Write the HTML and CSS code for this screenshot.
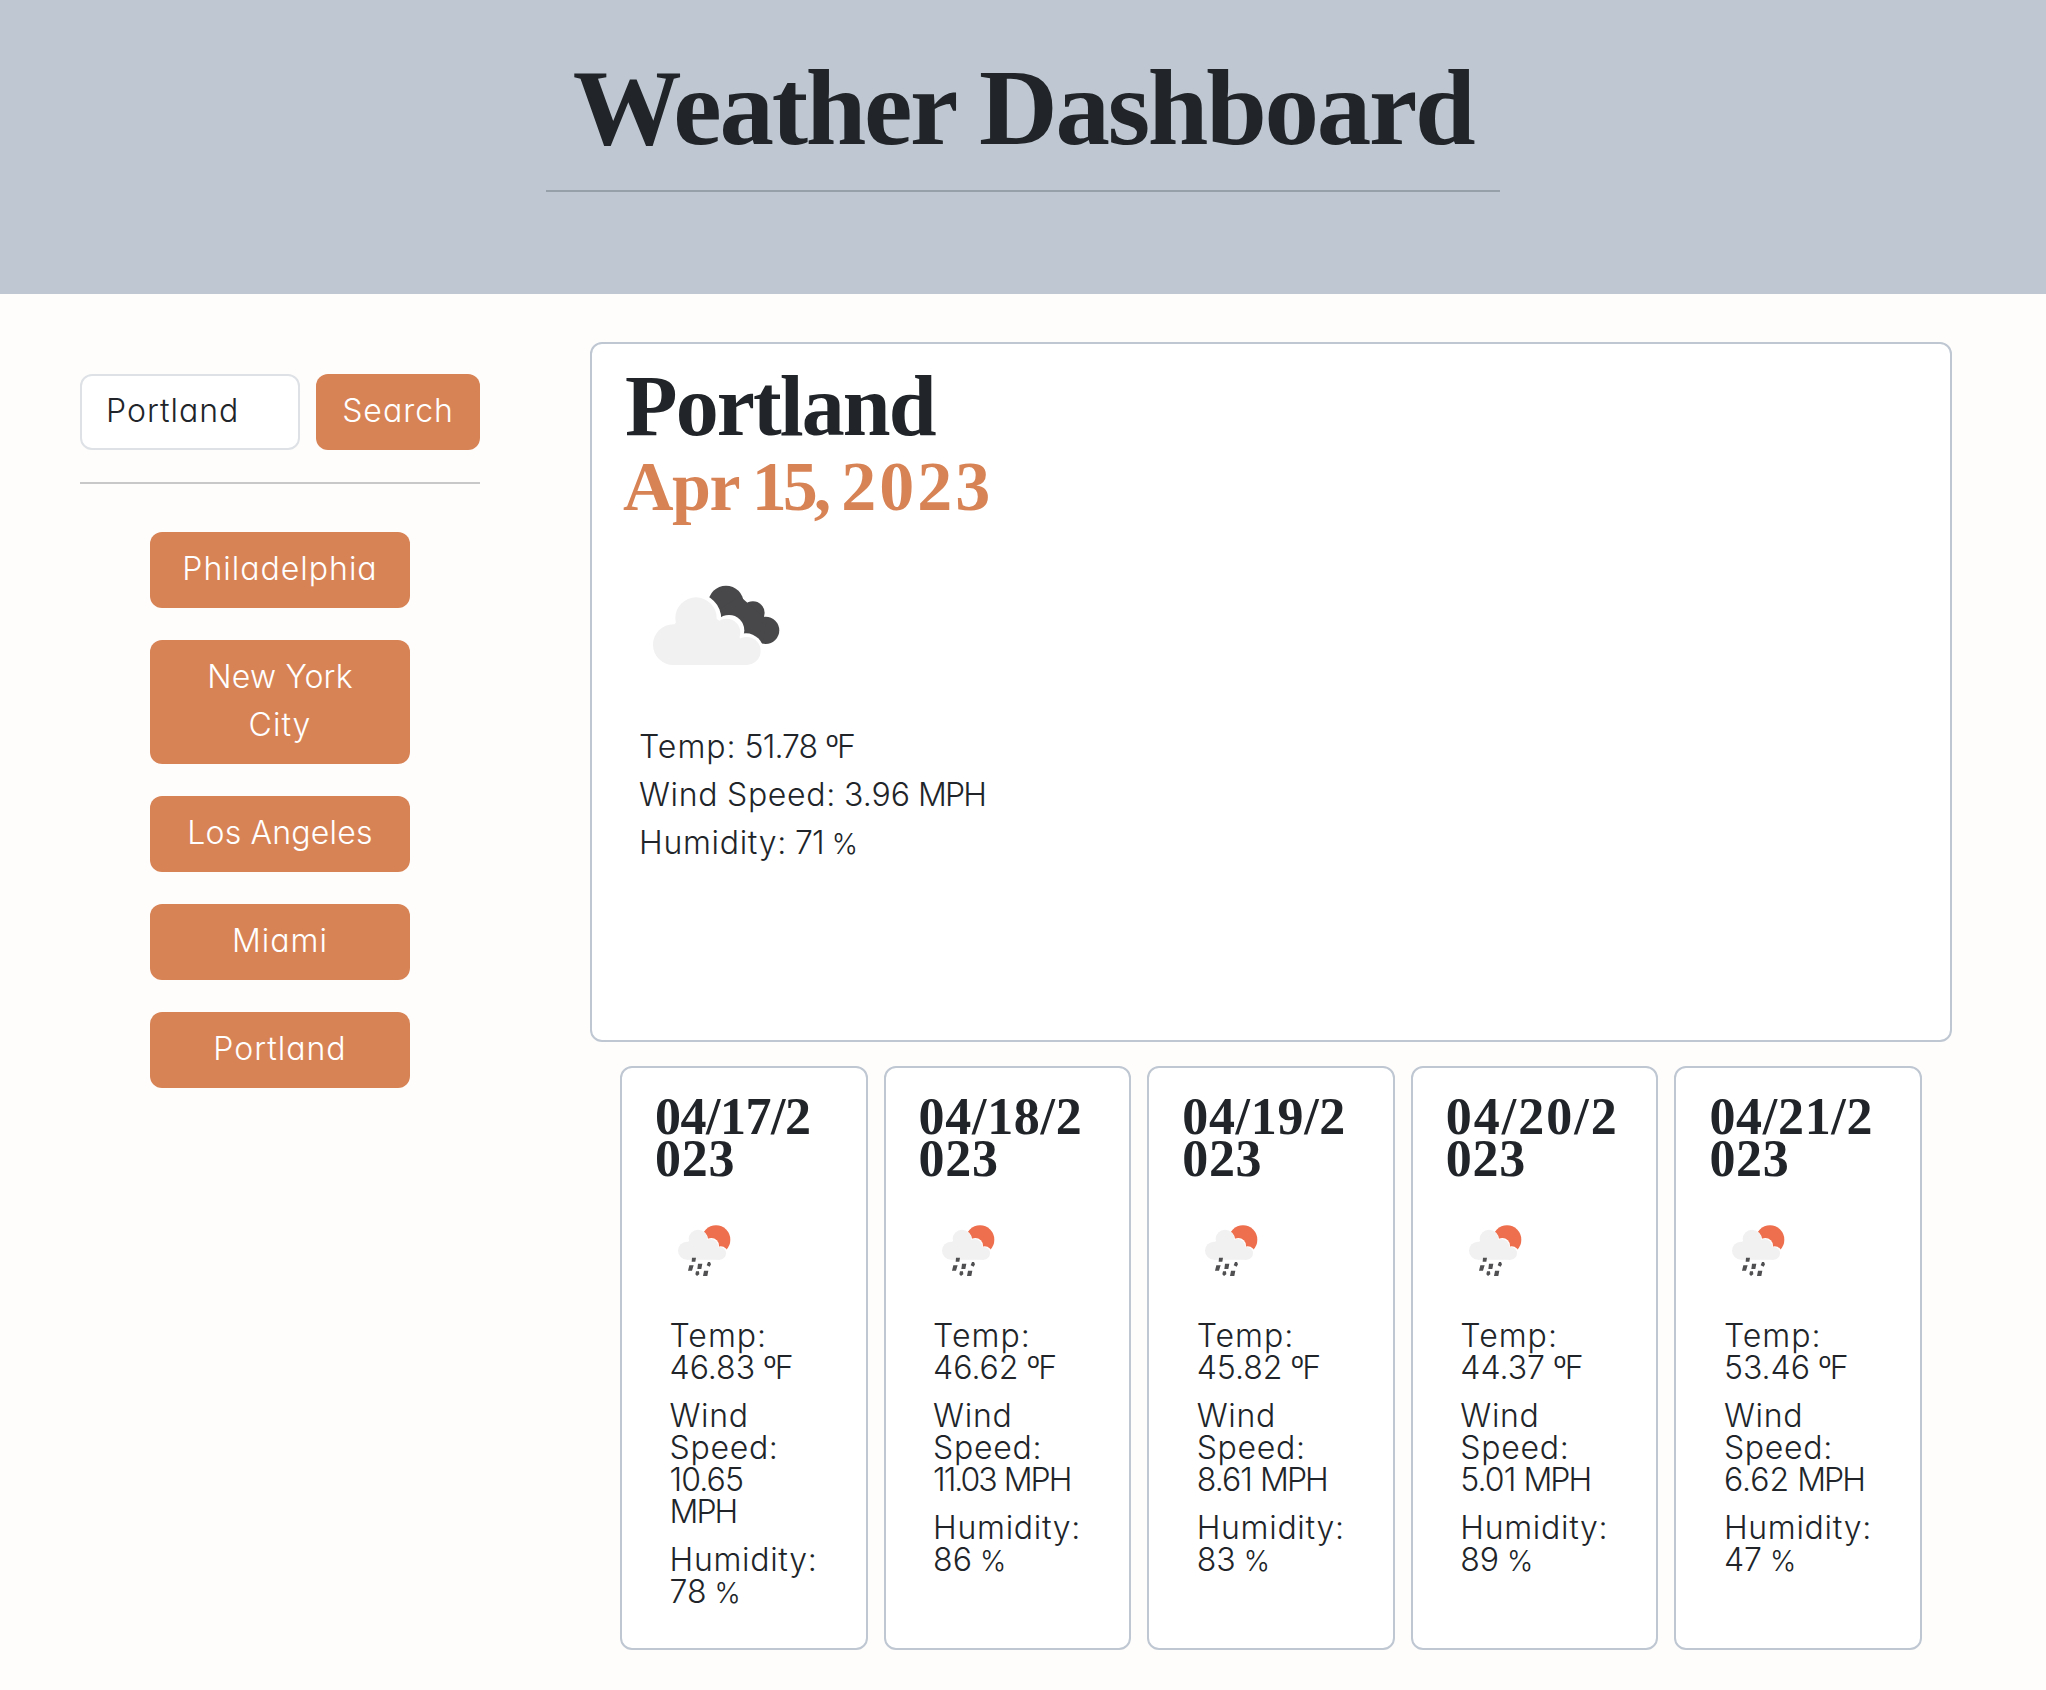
FILE: index.html
```html
<!DOCTYPE html>
<html lang="en">
<head>
<meta charset="utf-8">
<title>Weather Dashboard</title>
<link rel="stylesheet" href="styles.css">
</head>
<body>
<svg class="defs" width="0" height="0" aria-hidden="true">
  <symbol id="broken-clouds" viewBox="210 760 400 256">
    <g fill="#48484a">
      <circle cx="438" cy="821" r="53"/>
      <circle cx="519" cy="850" r="35"/>
      <circle cx="557" cy="902" r="41"/>
      <path d="M400 850L480 800L560 870L550 940L500 930Z"/>
    </g>
    <g fill="#fff">
      <circle cx="348" cy="868" r="76"/>
      <circle cx="447" cy="902" r="46"/>
      <circle cx="498" cy="964" r="53"/>
      <path d="M360 900H480V960H360Z"/>
    </g>
    <g fill="#f1f1f1">
      <circle cx="348" cy="865" r="62"/>
      <circle cx="280" cy="945" r="61"/>
      <circle cx="440" cy="908" r="41"/>
      <circle cx="500" cy="964" r="42"/>
      <path d="M280 890L300 860H400L478 920L500 1006H280Z"/>
    </g>
  </symbol>
  <symbol id="sun-rain" viewBox="198 580 168 164">
    <circle cx="318" cy="630" r="43" fill="#ed6f4d"/>
    <g fill="#fff">
      <circle cx="264" cy="632" r="31"/>
      <circle cx="304" cy="648" r="23"/>
      <circle cx="332" cy="672" r="22"/>
      <path d="M270 645H325V690H270Z"/>
    </g>
    <g fill="#f1f1f1">
      <circle cx="264" cy="628" r="28"/>
      <circle cx="231" cy="663" r="27"/>
      <circle cx="302" cy="650" r="22"/>
      <circle cx="329" cy="671" r="19"/>
      <path d="M231 640L245 625H285L322 655L329 690H231Z"/>
    </g>
    <g fill="#505052">
      <path d="M246 684h12l-2 12h-11zM238 707h13l-5 16h-12zM264 702h13l-3 16h-12zM294 697h6l3 7-4 7-9-4zM258 725h9l1 9-7 5-5-5zM282 723h13l-3 16h-13z"/>
    </g>
  </symbol>
</svg>

<header class="header">
  <h1 class="title">Weather Dashboard</h1>
  <hr class="title-rule">
</header>

<main class="layout">
  <aside class="sidebar">
    <form class="search">
      <div class="search-input">Portland</div>
      <button class="btn search-btn" type="button">Search</button>
    </form>
    <hr class="rule">
    <div class="history">
      <button class="btn" type="button">Philadelphia</button>
      <button class="btn tight" type="button">New York <span class="wide">City</span></button>
      <button class="btn tight" type="button">Los Angeles</button>
      <button class="btn" type="button">Miami</button>
      <button class="btn" type="button">Portland</button>
    </div>
  </aside>

  <section class="weather">
    <article class="current">
      <h2 class="city">Portland</h2>
      <h3 class="date">Apr <span class="date-day">15,</span> <span class="date-year">2023</span></h3>
      <svg class="icon-current"><use href="#broken-clouds"/></svg>
      <div class="stats">
        <p><span class="wide">Temp:</span> <span class="ones">51.78</span> <span class="deg">ºF</span></p>
        <p><span class="word">Wind Speed:</span> 3.96 <span class="mph">MPH</span></p>
        <p><span class="word">Humidity:</span> <span class="ones">71</span> <span class="pct">%</span></p>
      </div>
    </article>

    <div class="forecast">
      <article class="day">
        <h4><span class="snug">04/17/2</span><br>023</h4>
        <svg class="icon-day"><use href="#sun-rain"/></svg>
        <div class="day-stats">
          <p><span class="wide">Temp:</span><br>46.83 <span class="deg">ºF</span></p>
          <p><span class="word">Wind<br>Speed:</span><br><span class="ones">10.65</span><br><span class="mph">MPH</span></p>
          <p><span class="word">Humidity:</span><br>78 <span class="pct">%</span></p>
        </div>
      </article>
      <article class="day">
        <h4>04/18/2<br>023</h4>
        <svg class="icon-day"><use href="#sun-rain"/></svg>
        <div class="day-stats">
          <p><span class="wide">Temp:</span><br>46.62 <span class="deg">ºF</span></p>
          <p><span class="word">Wind<br>Speed:</span><br><span class="elevens">11.03</span> <span class="mph">MPH</span></p>
          <p><span class="word">Humidity:</span><br>86 <span class="pct">%</span></p>
        </div>
      </article>
      <article class="day">
        <h4>04/19/2<br>023</h4>
        <svg class="icon-day"><use href="#sun-rain"/></svg>
        <div class="day-stats">
          <p><span class="wide">Temp:</span><br>45.82 <span class="deg">ºF</span></p>
          <p><span class="word">Wind<br>Speed:</span><br><span class="ones">8.61</span> <span class="mph">MPH</span></p>
          <p><span class="word">Humidity:</span><br>83 <span class="pct">%</span></p>
        </div>
      </article>
      <article class="day">
        <h4><span class="loose">04/20/2</span><br>023</h4>
        <svg class="icon-day"><use href="#sun-rain"/></svg>
        <div class="day-stats">
          <p><span class="wide">Temp:</span><br>44.37 <span class="deg">ºF</span></p>
          <p><span class="word">Wind<br>Speed:</span><br><span class="ones">5.01</span> <span class="mph">MPH</span></p>
          <p><span class="word">Humidity:</span><br>89 <span class="pct">%</span></p>
        </div>
      </article>
      <article class="day">
        <h4>04/21/2<br>023</h4>
        <svg class="icon-day"><use href="#sun-rain"/></svg>
        <div class="day-stats">
          <p><span class="wide">Temp:</span><br>53.46 <span class="deg">ºF</span></p>
          <p><span class="word">Wind<br>Speed:</span><br>6.62 <span class="mph">MPH</span></p>
          <p><span class="word">Humidity:</span><br>47 <span class="pct">%</span></p>
        </div>
      </article>
    </div>
  </section>
</main>
</body>
</html>
```
FILE: styles.css
```css
* { box-sizing: border-box; margin: 0; padding: 0; }

body {
  min-height: 100vh;
  background: #fffdfc;
  color: #212529;
  font: 300 32px/48px Inter, "Open Sans", sans-serif;
  font-feature-settings: "cv11";
}

.defs { position: absolute; }

h1, h2, h3, h4 {
  font-family: "Liberation Serif", serif;
  font-weight: 700;
  white-space: nowrap;
}

hr { border: 0; height: 2px; }

.header {
  height: 294px;
  padding-top: 53px;
  background: #bec7d2;
  text-align: center;
}
.title { font-size: 109px; line-height: 110px; letter-spacing: -2.3px; }
.title-rule { width: 954px; margin: 27px auto 0; background: #95a0a9; }

.layout { display: flex; padding: 48px 94px 40px 80px; gap: 110px; }

.sidebar { width: 400px; padding-top: 32px; }
.search { display: flex; gap: 16px; }
.search-input {
  width: 220px;
  height: 76px;
  padding: 11px 24px;
  border: 2px solid #dee2e6;
  border-radius: 12px;
  background: #fff;
  letter-spacing: 1px;
}
.btn {
  padding: 13px 24px 15px;
  border: 0;
  border-radius: 12px;
  background: #d88356;
  color: #fff;
  font: inherit;
  font-feature-settings: inherit;
  letter-spacing: 1px;
}
.search-btn { width: 164px; }
.tight { letter-spacing: 0.2px; }
.rule { margin-top: 32px; background: #c9c8c8; }
.history {
  display: flex;
  flex-direction: column;
  gap: 32px;
  width: 260px;
  margin: 48px auto 0;
}
.history .tight { padding: 13px 36px 15px; }

.weather { flex: 1; }
.current {
  height: 700px;
  padding: 19px 33px;
  border: 2px solid #bec7d2;
  border-radius: 12px;
  background: #fff;
}
.city { font-size: 86px; line-height: 86px; letter-spacing: -1.9px; }
.date {
  margin-top: 2px;
  margin-left: -2px;
  color: #d88356;
  font-size: 70px;
  line-height: 72px;
  letter-spacing: -1.5px;
  word-spacing: -2px;
}
.date-day { letter-spacing: -4px; }
.date-year { letter-spacing: 3px; }
.icon-current {
  display: block;
  width: 133.3px;
  height: 85.3px;
  margin: 60px 0 54.5px 25px;
}
.stats { padding-left: 14px; }
.stats, .day-stats { word-spacing: -1px; white-space: nowrap; }

.forecast {
  display: grid;
  grid-template-columns: repeat(5, 1fr);
  gap: 16px;
  padding: 24px 30px 0;
}
.day {
  height: 584px;
  padding: 28px 32px;
  border: 2px solid #bec7d2;
  border-radius: 12px;
  background: #fff;
}
.day h4 { padding-left: 1px; font-size: 52px; line-height: 42px; letter-spacing: 0.7px; }
.day h4 .snug { letter-spacing: -0.5px; }
.day h4 .loose { letter-spacing: 2px; }
.icon-day {
  display: block;
  width: 56px;
  height: 54.7px;
  margin: 43px 0 42.5px 22px;
}
.day-stats { padding-left: 15.5px; line-height: 32px; }
.day-stats p + p { margin-top: 16px; }

/* Tracking for the individual readings */
.wide { letter-spacing: 1px; }
.word { letter-spacing: 0.7px; }
.ones { letter-spacing: -0.9px; }
.elevens { letter-spacing: -2px; }
.mph { letter-spacing: -1.9px; }
.deg { letter-spacing: -2px; }
.pct { font-size: 28px; line-height: 1; letter-spacing: -1px; }
```
